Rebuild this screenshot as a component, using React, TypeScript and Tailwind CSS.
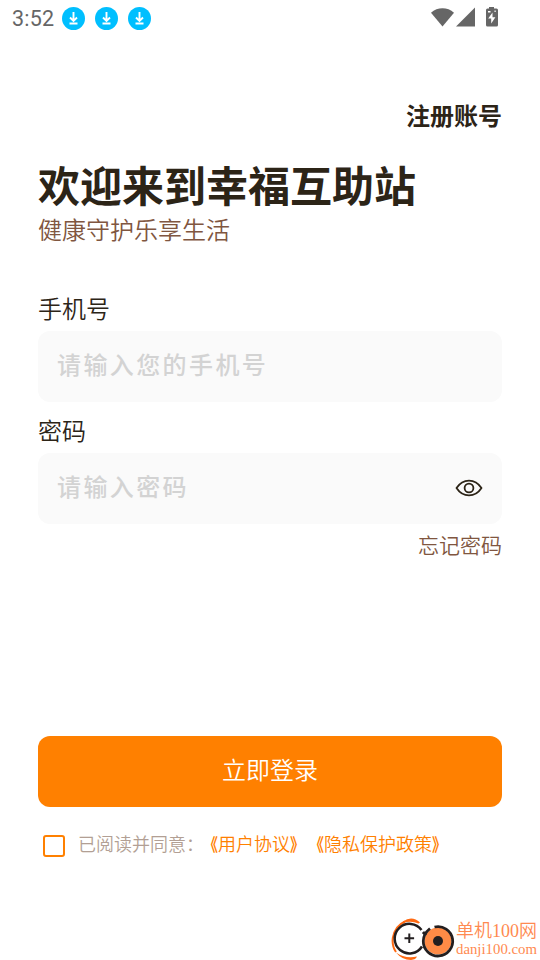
// src/pages/auth/Login.tsx
import { useState } from 'react';

function DownloadBadge() {
  return (
    <svg width="24" height="24" viewBox="0 0 24 24" fill="none">
      <circle cx="11.5" cy="12.5" r="11.5" fill="#00bfff" />
      <path d="M11.5 6v9M8 11.5l3.5 3.5 3.5-3.5M7.5 17.5h8" stroke="#fff" strokeWidth="1.9" />
    </svg>
  );
}

function StatusBar() {
  return (
    <div className="flex h-9 items-center pl-3 pr-[41px]">
      <span className="mt-px w-[50px] font-['Roboto',sans-serif] text-[21.5px] font-normal leading-6 tracking-[0.2px] text-[#666]">
        3:52
      </span>
      <div className="flex gap-[9px]">
        <DownloadBadge />
        <DownloadBadge />
        <DownloadBadge />
      </div>
      <div className="ml-auto flex">
        <svg width="68" height="22" viewBox="0 0 68 22" fill="#666">
          <path d="M0 5.7C6.5-.2 16.5-.2 23 5.7L11.5 19.5z" />
          <path d="M44 .5v19H25z" />
          <path d="M58 0h5v1.5h2.5q1.5 0 1.5 1.5v15q0 1.5-1.5 1.5h-9Q55 19.5 55 18V3q0-1.5 1.5-1.5H58z" />
          <path d="M61.5 5.5l-4.300 6h3v5l4.200-6.300h-2.900zM57 4h2.500v1.500H57zM63.500 3.500h1.200V5h-1.200z" fill="#fff" />
        </svg>
      </div>
    </div>
  );
}

function EyeIcon() {
  return (
    <svg width="28" height="18" viewBox="0 0 28 18" fill="none" stroke="#2c2417" strokeWidth="1.8">
      <path d="M1.5 9C8-.9 20-.9 26.5 9 20 18.9 8 18.9 1.5 9z" strokeLinejoin="round" />
      <circle cx="14" cy="9" r="4.4" />
    </svg>
  );
}

function SiteLogo() {
  return (
    <div className="flex h-[42px] w-[149px]">
      <svg className="shrink-0" width="64" height="42" viewBox="0 0 64 42" fill="none">
        <path d="M14 3.5Q4 8 1.8 20 .8 28 5 34" stroke="#ff6a13" strokeWidth="2" />
        <path d="M12 3.5q9-6.500 17 1l-1.500 1Q20 2.500 12 5zM5 34.500q9 6.500 21 4-1 3-6 3.500Q11 42 5 34.500z" fill="#ff6a13" />
        <path d="M30.5 12A14.8 14.8 0 1 0 31 28.500" stroke="#231f20" strokeWidth="2.5" />
        <path d="M18.3 15.500v9.600M13.500 20.300h9.600" stroke="#231f20" strokeWidth="2" />
        <circle cx="47" cy="23" r="13.500" fill="#ff8b46" />
        <path d="M32 14l3 3.500M39 10.500Q32.300 16 32.300 23a14.700 14.700 0 1 0 11.200-14" stroke="#231f20" strokeWidth="2.800" />
        <circle cx="47" cy="23" r="5" fill="#231f20" />
      </svg>
      <div className="ml-px whitespace-nowrap pt-px font-['Liberation_Serif','Noto_Sans_CJK_SC',serif] text-[#ff8a50]">
        <div className="h-[22px] text-[18px] leading-[24px]">单机100网</div>
        <div className="text-[14.8px] leading-[16px]">danji100.com</div>
      </div>
    </div>
  );
}

function AgreementLink({ title }: { title: string }) {
  return (
    <>
      <span className="inline-block w-[18px] origin-right scale-x-80 font-bold">《</span>
      {title}
      <span className="inline-block w-[18px] origin-left scale-x-80 font-bold">》</span>
    </>
  );
}

export default function Login() {
  const [showPassword, setShowPassword] = useState(false);
  const [agreed, setAgreed] = useState(false);

  return (
    <div className="flex h-[960px] w-[540px] flex-col overflow-hidden bg-white font-['Noto_Sans_CJK_SC',sans-serif] font-[350] text-[#2c2417]">
      <StatusBar />

      {/* Header */}
      <div className="flex flex-col px-[38px] pt-[61px]">
        <a href="#" className="self-end text-[24px] font-bold leading-[35px]">注册账号</a>
        <h1 className="mt-[27px] text-[42px] font-bold leading-[50px]">欢迎来到幸福互助站</h1>
        <p className="mt-0.5 text-[24px] leading-9 text-[#805640]">健康守护乐享生活</p>
      </div>

      {/* Form */}
      <form className="mt-[45px] flex flex-col px-[38px]" onSubmit={(e) => e.preventDefault()}>
        <label htmlFor="phone" className="text-[24px] leading-8">手机号</label>
        <input
          id="phone"
          type="tel"
          placeholder="请输入您的手机号"
          className="mt-[7px] h-[71px] rounded-xl bg-[#fafafa] px-[19px] pb-1.5 text-[24px] font-medium tracking-[2.4px] outline-none placeholder:text-[#d3d3d3]"
        />
        <label htmlFor="password" className="mt-3 text-[24px] leading-8">密码</label>
        <div className="mt-[7px] flex h-[71px] items-center rounded-xl bg-[#fafafa] px-[19px]">
          <input
            id="password"
            type={showPassword ? 'text' : 'password'}
            placeholder="请输入密码"
            className="h-full min-w-0 flex-1 bg-transparent pb-1.5 text-[24px] font-medium tracking-[2.4px] outline-none placeholder:text-[#d3d3d3]"
          />
          <button type="button" className="-mt-0.5" onClick={() => setShowPassword(!showPassword)}>
            <EyeIcon />
          </button>
        </div>
        <a href="#" className="mt-1.5 self-end text-[21px] leading-7 text-[#805640]">忘记密码</a>

        <button
          type="submit"
          className="mt-[178px] h-[71px] rounded-xl bg-[#ff8000] pb-1.5 text-[24px] text-white"
        >
          立即登录
        </button>

        {/* Agreement */}
        <div className="mt-[25px] flex h-[26px] items-center whitespace-nowrap pl-[5px] text-[18px] leading-[26px] text-[#ff8000]">
          <button
            type="button"
            onClick={() => setAgreed(!agreed)}
            className={`mr-[13px] mt-[1px] h-[22px] w-[22px] shrink-0 rounded-[3px] border-2 border-[#ff8000] ${agreed ? 'bg-[#ff8000]' : 'bg-white'}`}
          />
          <span className="-mt-1 w-[122px] text-[#b29f94]">已阅读并同意：</span>
          <a href="#" className="-mt-1 w-[106px]">
            <AgreementLink title="用户协议" />
          </a>
          <a href="#" className="-mt-1">
            <AgreementLink title="隐私保护政策" />
          </a>
        </div>
      </form>

      <div className="mt-auto flex justify-end">
        <SiteLogo />
      </div>
    </div>
  );
}
